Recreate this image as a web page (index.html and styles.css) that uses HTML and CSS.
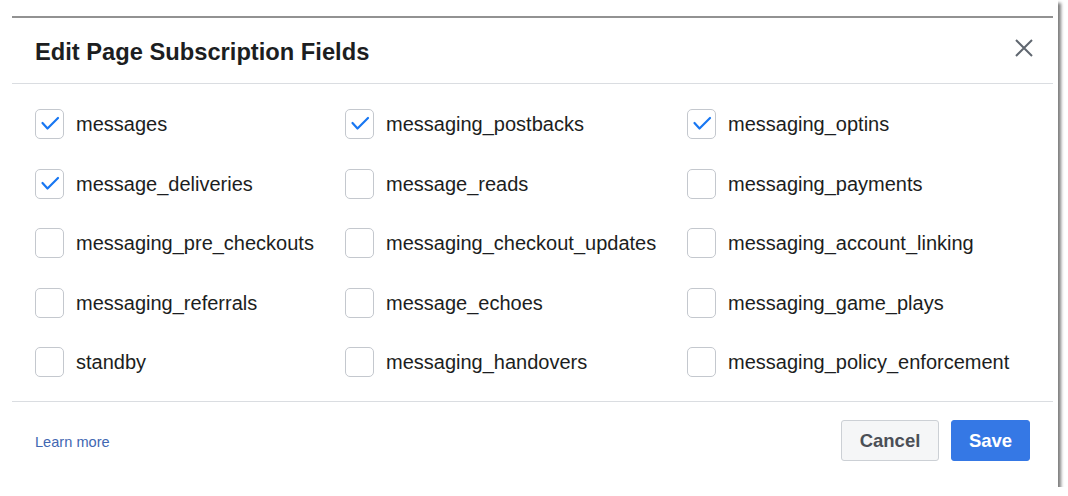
FILE: index.html
```html
<!DOCTYPE html>
<html>
<head>
<meta charset="utf-8">
<link rel="stylesheet" href="styles.css">
</head>
<body>
<div class="frame">
  <div class="dialog">
    <div class="header">
      <h1 class="title">Edit Page Subscription Fields</h1>
      <button class="close" aria-label="Close">
        <svg width="18" height="18" viewBox="0 0 18 18"><path d="M1 1 L17 17 M17 1 L1 17" stroke="#606770" stroke-width="2" fill="none"/></svg>
      </button>
    </div>
    <div class="body">
      <label class="item"><span class="box checked"><svg viewBox="0 0 30 30" width="30" height="30"><path d="M7.5 14 L12.5 19.5 L23 9" stroke="#1877f2" stroke-width="2.2" fill="none" stroke-linecap="round" stroke-linejoin="round"/></svg></span><span class="lbl">messages</span></label>
      <label class="item"><span class="box checked"><svg viewBox="0 0 30 30" width="30" height="30"><path d="M7.5 14 L12.5 19.5 L23 9" stroke="#1877f2" stroke-width="2.2" fill="none" stroke-linecap="round" stroke-linejoin="round"/></svg></span><span class="lbl">messaging_postbacks</span></label>
      <label class="item"><span class="box checked"><svg viewBox="0 0 30 30" width="30" height="30"><path d="M7.5 14 L12.5 19.5 L23 9" stroke="#1877f2" stroke-width="2.2" fill="none" stroke-linecap="round" stroke-linejoin="round"/></svg></span><span class="lbl">messaging_optins</span></label>

      <label class="item"><span class="box checked"><svg viewBox="0 0 30 30" width="30" height="30"><path d="M7.5 14 L12.5 19.5 L23 9" stroke="#1877f2" stroke-width="2.2" fill="none" stroke-linecap="round" stroke-linejoin="round"/></svg></span><span class="lbl">message_deliveries</span></label>
      <label class="item"><span class="box"></span><span class="lbl">message_reads</span></label>
      <label class="item"><span class="box"></span><span class="lbl">messaging_payments</span></label>

      <label class="item"><span class="box"></span><span class="lbl">messaging_pre_checkouts</span></label>
      <label class="item"><span class="box"></span><span class="lbl">messaging_checkout_updates</span></label>
      <label class="item"><span class="box"></span><span class="lbl">messaging_account_linking</span></label>

      <label class="item"><span class="box"></span><span class="lbl">messaging_referrals</span></label>
      <label class="item"><span class="box"></span><span class="lbl">message_echoes</span></label>
      <label class="item"><span class="box"></span><span class="lbl">messaging_game_plays</span></label>

      <label class="item"><span class="box"></span><span class="lbl">standby</span></label>
      <label class="item"><span class="box"></span><span class="lbl">messaging_handovers</span></label>
      <label class="item"><span class="box"></span><span class="lbl">messaging_policy_enforcement</span></label>
    </div>
    <div class="footer">
      <a class="learn" href="#">Learn more</a>
      <div class="actions">
        <button class="btn cancel">Cancel</button>
        <button class="btn save">Save</button>
      </div>
    </div>
  </div>
</div>
</body>
</html>
```
FILE: styles.css
```css
html, body {
  margin: 0;
  padding: 0;
  background: #ffffff;
}
body {
  font-family: "Liberation Sans", Arial, sans-serif;
  color: #1c1e21;
}
.frame {
  width: 1058px;
  height: 487px;
  background: #ffffff;
  box-shadow: 3px 3px 3px rgba(0, 0, 0, 0.5);
  padding-top: 16px;
  box-sizing: border-box;
}
.dialog {
  margin-left: 12px;
  width: 1041px;
  border-top: 2px solid #929292;
}
.header {
  height: 66px;
  box-sizing: border-box;
  border-bottom: 1px solid #dadde1;
  display: flex;
  align-items: center;
  justify-content: space-between;
  padding: 0 20px 0 23px;
}
.title {
  margin: 3px 0 0 0;
  font-size: 23.7px;
  font-weight: bold;
  color: #1c1e21;
}
.close {
  border: 0;
  background: transparent;
  padding: 0;
  width: 18px;
  height: 18px;
  margin-bottom: 6px;
  display: block;
}
.close svg { display: block; }
.body {
  display: grid;
  grid-template-columns: 310px 342px auto;
  grid-auto-rows: 30px;
  row-gap: 29.5px;
  padding: 25px 0 24px 23px;
  border-bottom: 1px solid #dadde1;
}
.item {
  display: flex;
  align-items: center;
  gap: 12px;
}
.box {
  width: 29px;
  height: 30px;
  box-sizing: border-box;
  border: 1px solid #c4c8ce;
  border-radius: 5px;
  background: #fff;
  flex: none;
  position: relative;
}
.box svg {
  position: absolute;
  left: -1px;
  top: -1px;
}
.lbl {
  font-size: 20px;
  color: #1c1e21;
  padding-top: 1px;
}
.footer {
  display: flex;
  align-items: center;
  justify-content: space-between;
  padding: 18px 23px 0 23px;
}
.learn {
  font-size: 14.6px;
  color: #4267b2;
  text-decoration: none;
  padding-top: 2px;
}
.actions {
  display: flex;
  gap: 12px;
}
.btn {
  height: 41px;
  box-sizing: border-box;
  border-radius: 3px;
  font-family: "Liberation Sans", Arial, sans-serif;
  font-weight: bold;
  font-size: 18.5px;
  padding: 0;
}
.cancel {
  width: 98px;
  background: #f5f6f7;
  border: 1px solid #ccd0d5;
  color: #4b4f56;
}
.save {
  width: 79px;
  background: #3578e5;
  border: 1px solid #3578e5;
  color: #ffffff;
}
```
